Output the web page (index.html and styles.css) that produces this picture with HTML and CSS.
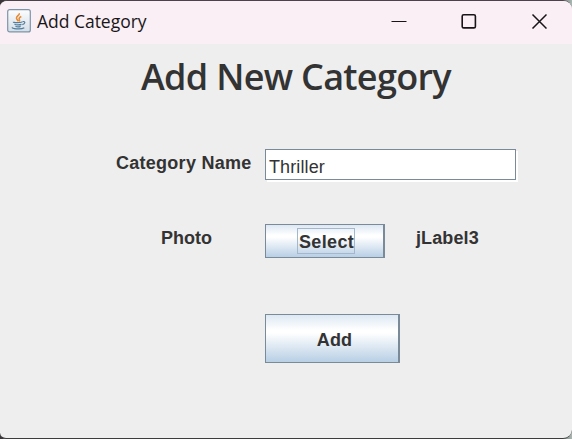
FILE: index.html
```html
<!DOCTYPE html>
<html lang="en">
<head>
<meta charset="utf-8">
<title>Add Category</title>
<link rel="stylesheet" href="styles.css">
</head>
<body>
<div class="window">
  <header class="titlebar">
    <svg class="app-icon" width="24" height="24" viewBox="0 0 24 24" fill="none">
      <defs><linearGradient id="tile" x2="0" y2="1"><stop stop-color="#fdfdfd"/><stop offset="1" stop-color="#d3dee7"/></linearGradient></defs>
      <rect x=".7" y=".7" width="22.6" height="22.2" rx="2" fill="url(#tile)" stroke="#7d95a8" stroke-width="1.2"/>
      <path d="M12.3 4.200c.6 2-3.300 3-2.800 5.200.3 1.200 1.500 1.800 1.600 3M14.300 7.500c-1.500.8-2.700 1.600-2 2.900.4.700.5 1.200-.2 2" stroke="#e58a35" stroke-width="1.600"/>
      <path d="M6.500 12.900c-1 .9 6 1.100 8.700.1M7.500 15.300c1.500.8 5.300.8 7 .1M8.500 17.300c1.300.7 3.700.7 5.100.1M15.500 12.600c3.600-.7 2.600 2.500-.2 3M5.500 18.200c-2 1.500 8.500 2.700 11.800.5" stroke="#527d9d" stroke-width="1.200"/>
    </svg>
    <span class="caption">Add Category</span>
    <div class="controls">
      <svg width="16" height="16" viewBox="0 0 16 16"><path d="M.5 8.500h15" stroke="#171316" stroke-width="1.200"/></svg>
      <svg width="16" height="16" viewBox="0 0 16 16"><rect x="1.200" y="1.700" width="13.200" height="13.200" rx="1.500" fill="none" stroke="#171316" stroke-width="1.600"/></svg>
      <svg width="16" height="16" viewBox="0 0 16 16"><path d="M1.500 1.500l14 14M15.500 1.500l-14 14" stroke="#171316" stroke-width="1.500"/></svg>
    </div>
  </header>
  <main class="form">
    <h1 class="heading">Add New Category</h1>
    <div class="row name-row">
      <label class="label name-label" for="name">Category Name</label>
      <input class="field" id="name" type="text" value="Thriller">
    </div>
    <div class="row photo-row">
      <span class="label photo-label">Photo</span>
      <button class="button select"><span class="focus">Select</span></button>
      <span class="label file-label">jLabel3</span>
    </div>
    <div class="row add-row">
      <button class="button add">Add</button>
    </div>
  </main>
</div>
</body>
</html>
```
FILE: styles.css
```css
* { box-sizing: border-box; }
body {
  margin: 0;
  background: linear-gradient(90deg, #3b3539 0 96%, #a9b6b2);
  font-family: "Liberation Sans", Arial, sans-serif;
  color: #333;
}
.window {
  height: 439px;
  border-top: 1px solid #4b4349;
  border-bottom: 1px solid #3c3c3c;
  border-radius: 7px 9px 9px 6px;
  background: #eee;
  overflow: hidden;
}
.titlebar {
  height: 43px;
  display: flex;
  align-items: center;
  padding: 0 25px 3px 7px;
  background: #f9eff4;
}
.app-icon { flex: none; }
.caption {
  margin-left: 6px;
  font: 17.500px/24px "Open Sans", "Noto Sans", sans-serif;
  letter-spacing: -0.020px;
  white-space: nowrap;
  color: #191619;
}
.controls { display: flex; gap: 54px; margin-left: auto; }
.form { display: flex; flex-direction: column; }
.heading {
  margin: 7px 0 0 141px;
  font: 600 36px/52px "Open Sans", "Noto Sans", sans-serif;
  letter-spacing: -0.700px;
  white-space: nowrap;
}
.row { display: flex; }
.name-row { margin: 46px 0 0 116px; height: 33px; }
.label {
  width: 149px;
  padding-top: 4px;
  font-size: 18px;
  line-height: 20px;
  font-weight: bold;
  white-space: nowrap;
}
.name-label { letter-spacing: 0.270px; }
.field {
  width: 251px;
  height: 31px;
  padding: 5px 3px 0;
  border: 1px solid #7a8a99;
  border-radius: 0;
  outline: none;
  box-shadow: 2px 2px 0 #fff;
  background: #fff;
  font: 18px "Liberation Sans", Arial, sans-serif;
  letter-spacing: 0.120px;
  color: #333;
}
.photo-row { margin: 42px 0 0 161px; }
.photo-label { width: 104px; }
.file-label { margin-left: 31px; letter-spacing: 0.120px; }
.button {
  padding: 0;
  border: 1px solid #7a8a99;
  border-right-width: 2px;
  background: linear-gradient(#dde8f3, #fff 32%, #fff 38%, #b8cfe5);
  font: bold 18px "Liberation Sans", Arial, sans-serif;
  color: #333;
}
.select { width: 120px; height: 34px; }
.focus {
  display: block;
  width: 58px;
  height: 26px;
  margin: -1px 0 0 31px;
  padding-left: 1px;
  border: 1px solid #a3b8cc;
  line-height: 27px;
  text-align: left;
  letter-spacing: 0.350px;
}
.add-row { margin: 56px 0 0 265px; }
.add { width: 135px; height: 49px; padding: 3px 0 0 5px; letter-spacing: 0.200px; }
```
